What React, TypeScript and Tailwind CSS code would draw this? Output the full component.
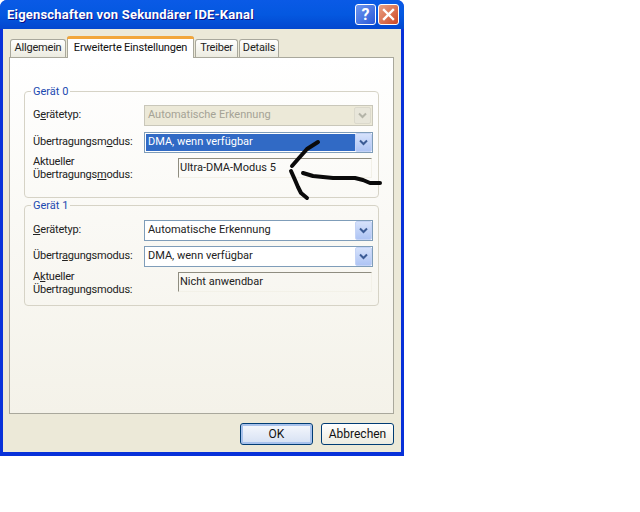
import React from "react";

function Chevron({ disabled }: { disabled?: boolean }) {
  return (
    <div
      className={
        disabled
          ? "w-[17px] h-[17px] mr-[1px] flex items-center justify-center rounded-[2px] bg-[#e8e6da] border border-[#dbd9cc]"
          : "w-[17px] h-[19px] flex items-center justify-center rounded-[2px] bg-gradient-to-b from-[#d6e2fb] to-[#aec4f4] border border-[#c4d3f6]"
      }
    >
      <svg width="9" height="7" viewBox="0 0 9 7">
        <path d="M1 1.5 L4.5 5 L8 1.5" fill="none" stroke={disabled ? "#b4b4a8" : "#3c5c96"} strokeWidth="2" />
      </svg>
    </div>
  );
}

function Select({ value, disabled, selected }: { value: string; disabled?: boolean; selected?: boolean }) {
  return (
    <div
      className={
        "w-[229px] h-[21px] flex items-center border pl-[1px] " +
        (disabled ? "border-[#c9c7ba] bg-[#ece9d8]" : "border-[#7f9db9] bg-white")
      }
    >
      <div
        className={
          "flex-1 h-[17px] flex items-center pl-[2px] text-[11px] " +
          (selected ? "bg-[#316ac5] text-white" : disabled ? "text-[#a5a396]" : "text-[#222]")
        }
      >
        {value}
      </div>
      <Chevron disabled={disabled} />
    </div>
  );
}

function Row({ label, children }: { label: React.ReactNode; children: React.ReactNode }) {
  return (
    <div className="flex items-center justify-between pr-[5px] pl-[8px] h-[21px]">
      <span className="text-[11px] tracking-[-0.2px] text-[#222]">{label}</span>
      {children}
    </div>
  );
}

function ModeRow({ first, second, value, offset }: { first: React.ReactNode; second: React.ReactNode; value: string; offset: string }) {
  return (
    <div className="flex items-start justify-between pr-[6px] pl-[8px]">
      <div className="text-[11px] leading-[13px] tracking-[-0.2px] text-[#222]">
        <div>{first}</div>
        <div>{second}</div>
      </div>
      <div className={"w-[194px] h-[20px] flex items-center pl-[1px] text-[11px] text-[#222] border border-[#f3f1e8] border-t-[#8f8d80] border-l-[#8f8d80] " + offset}>
        {value}
      </div>
    </div>
  );
}

function Group({ title, children, height }: { title: string; children: React.ReactNode; height: string }) {
  return (
    <fieldset className={"mx-[14px] border border-[#d6d3c6] rounded-[4px] " + height}>
      <legend className="ml-[6px] px-[2px] text-[11px] leading-[13px] text-[#1c49b0]">{title}</legend>
      {children}
    </fieldset>
  );
}

function Tab({ label, width, active }: { label: string; width: string; active?: boolean }) {
  if (active) {
    return (
      <div className={"relative z-10 h-[22px] -mb-[1px] flex flex-col bg-white border-x border-[#a9a89c] rounded-t-[3px] " + width}>
        <div className="h-[3px] -mx-[1px] rounded-t-[3px] bg-[#f2a63a]" />
        <div className="flex-1 flex items-center justify-center text-[11px] tracking-[-0.2px] text-[#111]">{label}</div>
      </div>
    );
  }
  return (
    <div
      className={
        "h-[18px] flex items-center justify-center text-[11px] tracking-[-0.2px] text-[#222] bg-gradient-to-b from-white to-[#ecebe0] border-x border-t border-[#a9a89c] rounded-t-[3px] " +
        width
      }
    >
      {label}
    </div>
  );
}

function InkArrow() {
  return (
    <svg className="absolute left-[285px] top-[136px]" width="100" height="66" viewBox="0 0 100 66">
      <g fill="none" stroke="#0a0a0a" strokeWidth="4" strokeLinecap="round" strokeLinejoin="round">
        <path d="M33 6 L22 13 L14 22 L7 30" />
        <path d="M6 35 L10 44 L13 51 L16 57 L22 62" />
        <path d="M18 37 L28 40 L48 42 L70 42 L78 44 L85 47 L95 47" />
      </g>
    </svg>
  );
}

export default function App() {
  return (
    <div className="relative w-[640px] h-[512px] bg-white overflow-hidden font-['Roboto',sans-serif]">
      <div className="w-[404px] h-[456px] flex flex-col bg-[#0831d9] rounded-t-[7px] overflow-hidden">
        {/* title bar */}
        <div className="h-[29px] flex items-center justify-between pl-[7px] pr-[5px] bg-gradient-to-b from-[#0a5ae6] via-[#0458e0] to-[#0347cf]">
          <span className="text-[13px] font-bold tracking-[0.2px] text-white [text-shadow:1px_1px_#0f1089]">
            Eigenschaften von Sekundärer IDE-Kanal
          </span>
          <div className="flex gap-[2px]">
            <div className="w-[21px] h-[21px] flex items-center justify-center rounded-[3px] border border-white bg-gradient-to-br from-[#6f96ee] to-[#2a58d8] text-white text-[16px] font-bold">
              ?
            </div>
            <div className="w-[21px] h-[21px] flex items-center justify-center rounded-[3px] border border-white bg-gradient-to-br from-[#e9a184] to-[#cc4420]">
              <svg width="13" height="13" viewBox="0 0 13 13">
                <path d="M2 2 L11 11 M11 2 L2 11" stroke="#fff" strokeWidth="2.4" strokeLinecap="square" />
              </svg>
            </div>
          </div>
        </div>

        {/* dialog body */}
        <div className="mx-[3px] h-[423px] bg-[#ece9d8] flex flex-col">
          <div className="flex items-end gap-[1px] pl-[7px] h-[28px] shrink-0">
            <Tab label="Allgemein" width="w-[56px]" />
            <Tab label="Erweiterte Einstellungen" width="w-[127px]" active />
            <Tab label="Treiber" width="w-[43px]" />
            <Tab label="Details" width="w-[40px]" />
          </div>

          <div className="ml-[6px] mr-[7px] h-[357px] bg-gradient-to-b from-white to-[#f4f2e9] border border-[#a9a89c] pt-[27px]">
            <Group title="Gerät 0" height="h-[113px]">
              <div className="mt-[7px]">
                <Row label={<>G<u>e</u>rätetyp:</>}>
                  <Select value="Automatische Erkennung" disabled />
                </Row>
              </div>
              <div className="mt-[6px]">
                <Row label={<>Übertragungsm<u>o</u>dus:</>}>
                  <Select value="DMA, wenn verfügbar" selected />
                </Row>
              </div>
              <div className="mt-[2px]">
                <ModeRow first="Aktueller" second={<>Übertragungs<u>m</u>odus:</>} value="Ultra-DMA-Modus 5" offset="mt-[3px]" />
              </div>
            </Group>
            <div className="h-[1px]" />
            <Group title="Gerät 1" height="h-[107px]">
              <div className="mt-[8px]">
                <Row label={<><u>G</u>erätetyp:</>}>
                  <Select value="Automatische Erkennung" />
                </Row>
              </div>
              <div className="mt-[5px]">
                <Row label={<>Übertr<u>a</u>gungsmodus:</>}>
                  <Select value="DMA, wenn verfügbar" />
                </Row>
              </div>
              <div className="mt-[3px]">
                <ModeRow first={<>A<u>k</u>tueller</>} second="Übertragungsmodus:" value="Nicht anwendbar" offset="mt-[2px]" />
              </div>
            </Group>
          </div>

          <div className="flex justify-end gap-[8px] pr-[7px] pt-[9px]">
            <button className="w-[73px] h-[22px] rounded-[3px] border border-[#003c74] bg-gradient-to-b from-[#f6f8fd] to-[#d5e0f3] shadow-[inset_0_0_0_2px_#a8c2ec] text-[12px] text-[#111]">
              OK
            </button>
            <button className="w-[73px] h-[22px] rounded-[3px] border border-[#003c74] bg-gradient-to-b from-white to-[#ecebe0] text-[12px] text-[#111]">
              Abbrechen
            </button>
          </div>
        </div>
      </div>
      <InkArrow />
    </div>
  );
}
